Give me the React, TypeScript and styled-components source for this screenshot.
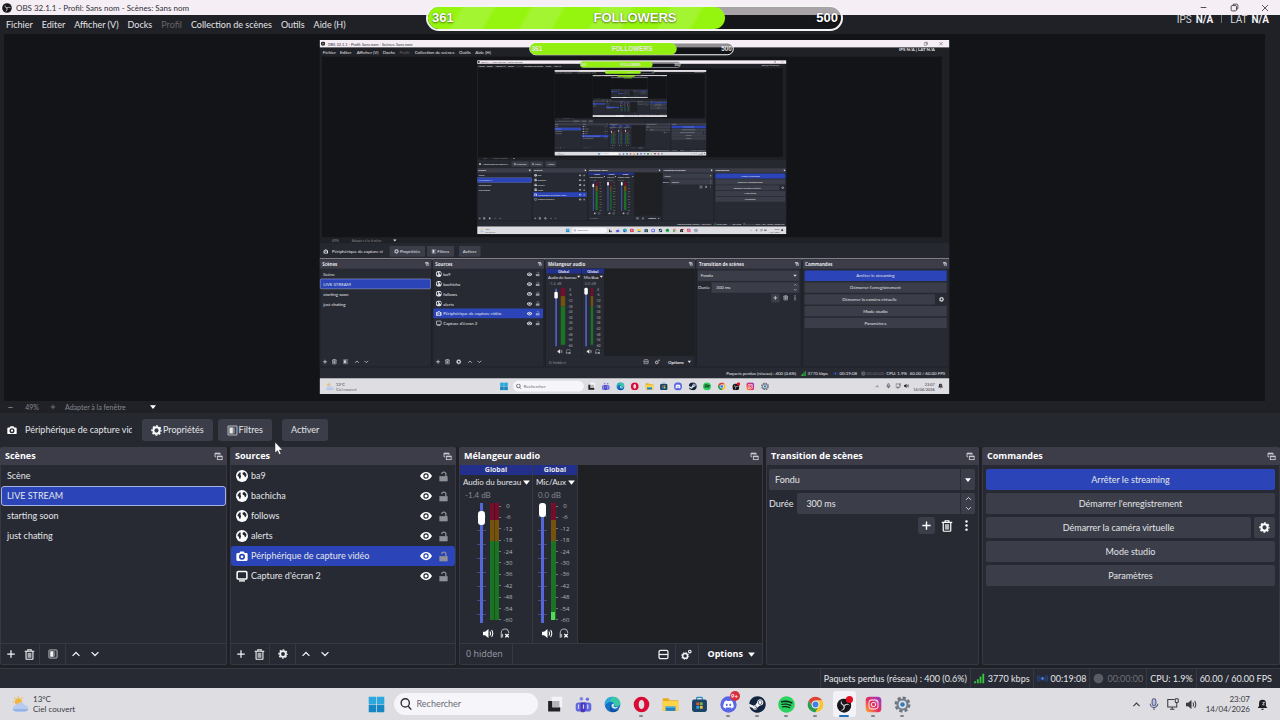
import React from "react";
import styled, { createGlobalStyle, css } from "styled-components";
import { FaDiscord, FaInstagram, FaSpotify, FaSteam } from "react-icons/fa";

const c = {
  canvas: "#131418",
  chrome: "#1f2126",
  panel: "#272a33",
  toolbar: "#25282f",
  header: "#3c3d49",
  control: "#3b3e49",
  border: "#363944",
  accent: "#2b45b8",
  text: "#e4e5e8",
  dim: "#85878e",
  white: "#fefefe",
  titlebar: "#f5eef4",
  taskbar: "#dedde2",
};

const UI = 'Lato, "Open Sans", sans-serif';
const HEADING = '"Open Sans", "Noto Sans", sans-serif';

const GlobalStyle = createGlobalStyle`
  *, *::before, *::after { box-sizing: border-box; }
  body { margin: 0; background: ${c.panel}; color: ${c.text}; font: 9px/12px ${UI}; }
  button, input, select { font: inherit; color: inherit; margin: 0; padding: 0; border: 0; background: none; }
  ul { list-style: none; margin: 0; padding: 0; }
  svg { display: block; flex: none; }
`;

/* ---------- icons ---------- */

type IconProps = React.SVGProps<SVGSVGElement>;

const Glyph = ({ children, ...p }: IconProps) => (
  <svg viewBox="0 0 16 16" width="11" height="11" fill="none" stroke="currentColor" strokeWidth="2" aria-hidden="true" {...p}>
    {children}
  </svg>
);

const Plus = (p: IconProps) => <Glyph {...p}><path d="M8 2v12M2 8h12" /></Glyph>;
const Minus = (p: IconProps) => <Glyph {...p}><path d="M3 8h10" /></Glyph>;
const Up = (p: IconProps) => <Glyph {...p}><path d="M2.500 11 8 5.500l5.500 5.500" /></Glyph>;
const Down = (p: IconProps) => <Glyph {...p}><path d="M2.500 5 8 10.500 13.500 5" /></Glyph>;
const Caret = (p: IconProps) => <Glyph {...p}><path d="M2 4.500h12L8 12z" fill="currentColor" stroke="none" /></Glyph>;
const Dots = (p: IconProps) => (
  <Glyph {...p}><g fill="currentColor" stroke="none"><circle cx="8" cy="2" r="1.800" /><circle cx="8" cy="8" r="1.800" /><circle cx="8" cy="14" r="1.800" /></g></Glyph>
);
const Trash = (p: IconProps) => (
  <Glyph strokeWidth="1.600" {...p}>
    <path d="M1 3.200h14M5.500 3V1h5v2M3 3.500V14q0 1 1 1h8q1 0 1-1V3.500" />
    <path d="M5.200 5.500h5.600v7.300H5.200z" fill="currentColor" fillOpacity=".65" stroke="none" />
  </Glyph>
);
const Filter = (p: IconProps) => (
  <Glyph strokeWidth="1.500" {...p}>
    <rect x="1.500" y="1.500" width="13" height="13" rx="1" opacity=".75" />
    <path d="M3.500 3.500h5v9h-5z" fill="currentColor" stroke="none" />
    <path d="M8.500 3.500h3v9h-3z" fill="currentColor" fillOpacity=".4" stroke="none" />
  </Glyph>
);
const Gear = (p: IconProps) => (
  <Glyph {...p}>
    <circle cx="8" cy="8" r="4.600" strokeWidth="3" />
    <circle cx="8" cy="8" r="6.600" strokeWidth="2" strokeDasharray="2.800 2.380" strokeDashoffset="1.400" />
  </Glyph>
);
const Gears = (p: IconProps) => (
  <Glyph {...p}>
    <circle cx="6" cy="10" r="3.600" strokeWidth="2.200" />
    <circle cx="6" cy="10" r="5.200" strokeWidth="1.200" strokeDasharray="2 2.080" />
    <circle cx="12.800" cy="3.800" r="1.900" strokeWidth="1.600" />
  </Glyph>
);
const Camera = (p: IconProps) => (
  <Glyph {...p}>
    <path d="M5.500 2h5l1 2H14q1.500 0 1.500 1.500V13q0 1.500-1.500 1.500H2Q.5 14.500.5 13V5.500Q.5 4 2 4h2.500zM8 5a4 4 0 1 0 0 8 4 4 0 0 0 0-8zm0 2.200a1.800 1.800 0 1 1 0 3.600 1.800 1.800 0 0 1 0-3.600z" fill="currentColor" stroke="none" fillRule="evenodd" />
  </Glyph>
);
const Globe = (p: IconProps) => (
  <Glyph {...p}>
    <circle cx="8" cy="8" r="8" fill="currentColor" stroke="none" />
    <path d="M2.500 6 5 3l1.500.5L6 6l.8 2.200L5.600 12l-1.300-.6L3.800 9 2 8zM8.600 3.600l3-.8 2.400 3-.4 2.600-1.700 1.700-.8-2.800-2-1z" fill={c.panel} stroke="none" />
  </Glyph>
);
const Display = (p: IconProps) => (
  <Glyph {...p}><rect x="1.500" y="2" width="13" height="10" rx="1.500" /><path d="M4 14.500h8" strokeWidth="1.800" /></Glyph>
);
const Eye = (p: IconProps) => (
  <Glyph {...p}>
    <path d="M0 8q3-5.500 8-5.500T16 8q-3 5.500-8 5.500T0 8zm8-3.600a3.600 3.600 0 1 0 0 7.200 3.600 3.600 0 0 0 0-7.200z" fill="currentColor" stroke="none" fillRule="evenodd" />
    <circle cx="8" cy="8" r="2" fill="currentColor" stroke="none" />
  </Glyph>
);
const Unlock = (p: IconProps) => (
  <Glyph {...p}><path d="M2 7.500h12V15H2z" fill="currentColor" stroke="none" /><path d="M11.500 8V4.500a3 3 0 0 0-6 0" strokeWidth="1.800" /></Glyph>
);
const Popout = (p: IconProps) => (
  <Glyph strokeWidth="1.600" {...p}><path d="M4 8.500H1.800v-6.500h9v3" /><path d="M1.800 3h9" strokeWidth="2.400" /><rect x="6" y="7.500" width="8.500" height="6" /><path d="M6 8h8.500" strokeWidth="2.400" /></Glyph>
);
const Speaker = (p: IconProps) => (
  <Glyph strokeWidth="1.500" {...p}><path d="M0 5.500h3L8 1.500v13L3 10.500H0z" fill="currentColor" stroke="none" /><path d="M10 5q2 3 0 6M12.500 3q3.500 5 0 10" /></Glyph>
);
const Headphones = (p: IconProps) => (
  <Glyph strokeWidth="1.800" {...p}>
    <path d="M3 14.500H2V7.500a6 6 0 0 1 12 0V8" opacity=".6" /><path d="M2.500 9.500h2.500v5.500H2.500z" fill="currentColor" stroke="none" opacity=".6" />
    <path d="m8.500 9.500 5.500 5.500M14 9.500 8.500 15" strokeWidth="2.200" />
  </Glyph>
);
const Rows = (p: IconProps) => <Glyph strokeWidth="1.800" {...p}><rect x="1.500" y="2" width="13" height="12" rx="2" /><path d="M1.500 8h13" /></Glyph>;
const Signal = (p: IconProps) => <Glyph strokeWidth="2.600" {...p} stroke="#35c940"><path d="M1.500 15v-3M5.500 15V9M9.500 15V5M13.500 15V1" /></Glyph>;
const Broadcast = (p: IconProps) => (
  <Glyph strokeWidth="1.600" {...p} stroke="#2c52a8"><circle cx="8" cy="8" r="2.200" fill="#5f8fe8" /><path d="M4.500 4q-3 4 0 8M11.500 4q3 4 0 8M2 3q-3 5 0 10M14 3q3 5 0 10" opacity=".6" /></Glyph>
);
const RecordDot = (p: IconProps) => <Glyph {...p}><circle cx="8" cy="8" r="7" fill="#5a5c63" stroke="none" /></Glyph>;
const Search = (p: IconProps) => <Glyph strokeWidth="1.800" {...p}><circle cx="7" cy="6.500" r="5.500" /><path d="m11 11 4 4.500" /></Glyph>;
const Mic = (p: IconProps) => (
  <Glyph strokeWidth="1.500" {...p}><rect x="5.500" y="1" width="5" height="9" rx="2.500" fill="#b6bde4" /><path d="M3 7.500a5 5 0 0 0 10 0M8 12.500V16" /></Glyph>
);
const Network = (p: IconProps) => (
  <Glyph strokeWidth="1.400" {...p}><path d="M10 2H1v10h12V9M4 15h6M7 12v3" /><rect x="11" y="1" width="4" height="5" rx="1" /><path d="M13 6v3" /></Glyph>
);
const Bell = (p: IconProps) => (
  <Glyph {...p}><path d="M8 1q5 0 5 5v4l2 3H1l2-3V6q0-5 5-5zM6 14h4q-.5 2-2 2t-2-2z" fill="currentColor" stroke="none" /><path d="M8 5h3l-3 3.500h3" stroke={c.taskbar} strokeWidth="1.200" /></Glyph>
);
const Restore = (p: IconProps) => (
  <Glyph strokeWidth="1.500" {...p}><rect x="2" y="4.500" width="9.500" height="9.500" rx="2" /><path d="M5 4.500Q5 2 7 2h4.500Q14 2 14 4.500V9q0 2-2.500 2.500" /></Glyph>
);
const Close = (p: IconProps) => <Glyph strokeWidth="1.600" {...p}><path d="m2 2 12 12M14 2 2 14" /></Glyph>;

const Art = ({ children, ...p }: IconProps) => (
  <svg viewBox="0 0 24 24" width="17" height="17" aria-hidden="true" {...p}>{children}</svg>
);
const ObsLogo = (p: IconProps) => (
  <Art {...p}>
    <circle cx="12" cy="12" r="11.500" fill="#17171b" />
    <g fill="#d6d4da">
      <path d="M8 3.500q-1.500 4 1.500 6.200Q12.500 12 16 9.500q-.5 1-2.500 2.200Q8.500 13 6.500 8.500 6 5.500 8 3.500z" />
      <path d="M8 3.500q-1.500 4 1.500 6.200Q12.500 12 16 9.500q-.5 1-2.500 2.200Q8.500 13 6.500 8.500 6 5.500 8 3.500z" transform="rotate(120 12 12)" />
      <path d="M8 3.500q-1.500 4 1.500 6.200Q12.500 12 16 9.500q-.5 1-2.500 2.200Q8.500 13 6.500 8.500 6 5.500 8 3.500z" transform="rotate(240 12 12)" />
    </g>
  </Art>
);
const ObsLive = (p: IconProps) => (
  <Art {...p}>
    <svg x="1" y="3" width="21" height="21"><ObsLogo width="21" height="21" /></svg>
    <circle cx="19" cy="5" r="5" fill="#e00d1e" />
  </Art>
);
const Windows = (p: IconProps) => (
  <Art {...p}><path d="M1 1h10.500v10.500H1zM12.500 1H23v10.500H12.500z" fill="#2ba9de" /><path d="M1 12.500h10.500V23H1zM12.500 12.500H23V23H12.500z" fill="#1787c4" /></Art>
);
const TaskView = (p: IconProps) => (
  <Art {...p}><path d="M8 1h15v15H8z" fill="#f4f4f6" /><path d="M3 7h6v9h11v6H3z" fill="#222226" /><path d="M9 7h10v9H9z" fill="#b6b5ba" /></Art>
);
const Teams = (p: IconProps) => (
  <Art {...p}>
    <circle cx="9" cy="4" r="2.600" fill="#8486e6" /><circle cx="17.500" cy="4.500" r="2.300" fill="#6a6cdf" />
    <rect x="1" y="9" width="22" height="13" rx="4" fill="#6267dc" /><path d="M8 9h7v10q0 4-4 4t-3-4z" fill="#4a36bd" />
    <path d="M5 12v6M12 12v6M18 12v6" stroke="#cfd0ff" strokeWidth="1.800" />
  </Art>
);
const Edge = (p: IconProps) => (
  <Art {...p}>
    <circle cx="12" cy="12" r="11" fill="#1670c4" />
    <path d="M1.500 10Q4 1 12.500 1 22 1.500 23 10q0 5-6 5-3 0-2.500-2.500Q14 8 9.500 8 4 8 1.500 13z" fill="#38c6a4" />
    <path d="M1.200 10Q3 2 11 1q-3 3-1.500 7Q4 8 1.500 13z" fill="#29a7df" />
    <path d="M9.500 12q-1 7 6.500 8 3 0 5-1.500-3 4.500-9 4.500Q6 21 9.500 12z" fill="#0f4fa0" />
    <path d="M13.500 10.500q1.500 2-.3 4 3 2.300 6.800.3-1 2.700-4.500 3.200-4-.5-5-4 .5-3 3-3.500z" fill="#dfe9f2" />
  </Art>
);
const Opera = (p: IconProps) => (
  <Art {...p}><path d="M12 1a11 11 0 1 0 0 22 11 11 0 0 0 0-22zm0 4.500c2.500 0 4 3 4 6.500s-1.500 6.500-4 6.500S8 15.500 8 12s1.500-6.500 4-6.500z" fill="#d90b34" fillRule="evenodd" /></Art>
);
const Explorer = (p: IconProps) => (
  <Art {...p}>
    <path d="M1 3h8l2 3h12v15H1z" fill="#e8a91c" /><path d="M1 7h22v14H1z" fill="#fbd44a" /><path d="M5 15h14v6H5z" fill="#1e7fc9" /><path d="M5 15h14v2H5z" fill="#4aa8e8" />
  </Art>
);
const Store = (p: IconProps) => (
  <Art {...p}>
    <path d="M8 6V3q0-1 1-1h6q1 0 1 1v3" stroke="#2c8fc9" strokeWidth="1.800" fill="none" /><rect x="1.500" y="5" width="21" height="17.500" rx="3" fill="#1c4468" />
    <path d="M7.500 9h4v4h-4z" fill="#e3573a" /><path d="M12.500 9h4v4h-4z" fill="#7fba3c" /><path d="M7.500 14h4v4h-4z" fill="#2aa4e0" /><path d="M12.500 14h4v4h-4z" fill="#f5bd2c" />
  </Art>
);
const Discord = (p: IconProps) => <Art {...p}><circle cx="12" cy="12" r="11.500" fill="#5a66e4" /><g transform="translate(4 4)"><FaDiscord size={16} color="#fff" /></g></Art>;
const Steam = (p: IconProps) => <Art {...p}><circle cx="12" cy="12" r="10.500" fill="#f2f3f6" /><FaSteam size={24} color="#13243f" /></Art>;
const Spotify = (p: IconProps) => <Art {...p}><circle cx="12" cy="12" r="10" fill="#10241a" /><FaSpotify size={24} color="#2ad35f" /></Art>;
const Chrome = (p: IconProps) => (
  <Art {...p}>
    <circle cx="12" cy="12" r="11" fill="#e5e6e9" />
    <path d="M2.500 6.500A11 11 0 0 1 21.500 6.500H12a5.500 5.500 0 0 0-4.800 8.200z" fill="#de4335" />
    <path d="M2.500 6.500A11 11 0 0 0 12 23l4.800-8.200a5.500 5.500 0 0 1-9.600 0z" fill="#2a9d4e" />
    <path d="M21.500 6.500A11 11 0 0 1 12 23l4.800-8.200A5.500 5.500 0 0 0 12 6.500z" fill="#fbc52b" />
    <circle cx="12" cy="12" r="5.200" fill="#f4f5f8" /><circle cx="12" cy="12" r="4.200" fill="#3f7fe8" />
  </Art>
);
const Instagram = (p: IconProps) => (
  <Art {...p}>
    <defs><linearGradient id="insta" x1="0" y1="1" x2="1" y2="0"><stop offset="0" stopColor="#fdb53c" /><stop offset=".45" stopColor="#e5305a" /><stop offset="1" stopColor="#9438d0" /></linearGradient></defs>
    <rect x="1" y="1" width="22" height="22" rx="5" fill="url(#insta)" /><g transform="translate(4 4)"><FaInstagram size={16} color="#fff" /></g>
  </Art>
);
const Settings = (p: IconProps) => (
  <Art {...p}>
    <circle cx="12" cy="12" r="9.500" fill="none" stroke="#6c7480" strokeWidth="3.500" strokeDasharray="4.500 2.960" /><circle cx="12" cy="12" r="8.500" fill="#747c88" />
    <circle cx="12" cy="12" r="5.500" fill="#dde3ea" /><circle cx="12" cy="12" r="3.200" fill="#3679b8" />
  </Art>
);
const Weather = (p: IconProps) => (
  <Art {...p}>
    <circle cx="9" cy="8" r="5" fill="#f3b63c" /><path d="M9 0v3M1 8h2M3 2l2 2M15 2l-2 2" stroke="#f0bd58" strokeWidth="1.500" />
    <path d="M6 22q-5-.5-5-4.500T6 13q1.500-4 6-4t6 4q5 .5 5 4.500T18 22z" fill="#b7cbf0" /><path d="M6 22q-4.500-.5-5-3.500h22Q22 22 18 22z" fill="#93b3ea" />
  </Art>
);

/* ---------- data ---------- */

const windowTitle = "OBS 32.1.1 - Profil: Sans nom - Scènes: Sans nom";
const menus = [
  { label: "Fichier", x: 6 },
  { label: "Editer", x: 41 },
  { label: "Afficher (V)", x: 75 },
  { label: "Docks", x: 128 },
  { label: "Profil", x: 162, off: true },
  { label: "Collection de scènes", x: 193 },
  { label: "Outils", x: 283 },
  { label: "Aide (H)", x: 316 },
];
const scenes = ["Scène", "LIVE STREAM", "starting soon", "just chating"];
const activeScene = 1;
const sources = [
  { name: "ba9", Icon: Globe },
  { name: "bachicha", Icon: Globe },
  { name: "follows", Icon: Globe },
  { name: "alerts", Icon: Globe },
  { name: "Périphérique de capture vidéo", Icon: Camera, active: true },
  { name: "Capture d'écran 2", Icon: Display },
];
const levels = ["0", "-6", "-12", "-18", "-24", "-30", "-36", "-42", "-48", "-54", "-60"];
const commands = ["Arrêter le streaming", "Démarrer l'enregistrement", "Démarrer la caméra virtuelle", "Mode studio", "Paramètres"];
const apps: { name: string; Icon: (p: IconProps) => React.ReactElement; run?: boolean; active?: boolean; badge?: string }[] = [
  { name: "Vue des tâches", Icon: TaskView },
  { name: "Teams", Icon: Teams },
  { name: "Edge", Icon: Edge },
  { name: "Opera", Icon: Opera, run: true },
  { name: "Explorateur", Icon: Explorer },
  { name: "Store", Icon: Store },
  { name: "Discord", Icon: Discord, run: true, badge: "9+" },
  { name: "Steam", Icon: Steam, run: true },
  { name: "Spotify", Icon: Spotify, run: true },
  { name: "Chrome", Icon: Chrome, run: true },
  { name: "OBS", Icon: ObsLive, run: true, active: true },
  { name: "Instagram", Icon: Instagram, run: true },
  { name: "Réglages", Icon: Settings, run: true },
];

/* ---------- captured desktop shown on the preview canvas ---------- */

const Depth = React.createContext(1);

type TProps = { x: number; y: number; children: string; fill?: string; bold?: boolean; size?: number; anchor?: "start" | "middle" | "end" };

/* Past the second reflection a label is under two pixels high, so it becomes a faint bar. */
const T = ({ x, y, children, fill = c.text, bold, size = 9, anchor = "start" }: TProps) => {
  const depth = React.useContext(Depth);
  if (depth > 2) {
    const w = children.length * size * 0.5;
    const left = anchor === "start" ? x : anchor === "middle" ? x - w / 2 : x - w;
    return <rect x={left} y={y - 3} width={w} height="6" fill={fill} opacity=".35" />;
  }
  return <text x={x} y={y + 4} fill={fill} fontSize={size} fontWeight={bold ? 700 : 400} textAnchor={anchor}>{children}</text>;
};

const dockFrames = [
  { title: "Scènes", x: 0, w: 227 },
  { title: "Sources", x: 230, w: 226 },
  { title: "Mélangeur audio", x: 459, w: 304 },
  { title: "Transition de scènes", x: 766, w: 213 },
  { title: "Commandes", x: 982, w: 298 },
];

const CapturedChannel = ({ x, w, name, db, thumb, meter, bars }: { x: number; w: number; name: string; db: string; thumb: number; meter: number; bars: number }) => (
  <g>
    <rect x={x} y="465" width={w} height="178" fill={c.panel} />
    <rect x={x} y="465" width={w} height="10" fill="#22308c" />
    <T x={x + w / 2} y={470} size={8} bold anchor="middle">Global</T>
    <T x={x + 4} y={482} size={8}>{name}</T>
    <Caret x={x + w - 10} y={477} width="9" height="9" />
    <T x={x + 6} y={495} size={8} fill={c.dim}>{db}</T>
    <rect x={meter - 11} y="506" width="3" height="117" fill="#5468d8" />
    <rect x={meter - 13} y={thumb} width="7" height="14" rx="3" fill="#fff" />
    <rect x={meter} y="504" width={bars} height="17" fill="#750e2b" />
    <rect x={meter} y="521" width={bars} height="21" fill="#76520f" />
    <rect x={meter} y="542" width={bars} height="78" fill="#1c7323" />
    {levels.map((l, i) => <T key={l} x={meter + bars + 10} y={506 + i * 11.4} size={6} anchor="middle" fill="#b4b5ba">{l}</T>)}
    <Speaker x={x + w / 2 - 13} y={628} width="11" height="11" /><Headphones x={x + w / 2 + 4} y={628} width="11" height="11" />
  </g>
);

const Captured = ({ depth }: { depth: number }) => (
  <Depth.Provider value={depth}>
  <g fontFamily={UI} color={c.text}>
    <rect width="1280" height="720" fill={c.panel} />
    <rect y="15" width="1280" height="398" fill={c.chrome} />
    <rect x="4" y="34" width="1261" height="367" fill={c.canvas} />
    <rect width="1280" height="15" fill={c.titlebar} />
    <ObsLogo x={2} y={3} width="9" height="9" />
    <T x={16} y={8} size={8} fill="#33313a">{windowTitle}</T>
    <g color="#33313a"><Restore x={1228} y={3} width="9" height="9" /><Close x={1259} y={3} width="9" height="9" /></g>
    {menus.map((m) => <T key={m.label} x={m.x} y={24} fill={m.off ? "#62646b" : c.text}>{m.label}</T>)}
    <T x={1178} y={19} bold>IPS N/A  |  LAT N/A</T>
    <T x={25} y={407} size={7} fill={c.dim}>49%</T>
    <T x={65} y={407} size={7} fill={c.dim}>Adapter à la fenêtre</T>
    <Caret x={148} y={403} width="9" height="9" />
    <rect y="413" width="1280" height="34" fill={c.toolbar} />
    <Camera x={7} y={425} width="10" height="10" />
    <T x={25} y={430}>Périphérique de capture vi</T>
    <rect x="142" y="419" width="72" height="22" rx="2" fill={c.control} /><Gear x={151} y={425} width="10" height="10" /><T x={163} y={430}>Propriétés</T>
    <rect x="218" y="419" width="55" height="22" rx="2" fill={c.control} /><Filter x={227} y={425} width="10" height="10" /><T x={239} y={430}>Filtres</T>
    <rect x="283" y="419" width="44" height="22" rx="2" fill={c.control} /><T x={305} y={430} anchor="middle">Activer</T>
    {depth === 1 && <rect y="444" width="1280" height="3" fill="#a7a3ad" />}
    {dockFrames.map((d) => (
      <g key={d.title}>
        <rect x={d.x} y="447" width={d.w} height="218" fill={c.panel} stroke="#1e2026" strokeWidth="2" />
        <rect x={d.x} y="447" width={d.w} height="18" fill={c.header} />
        <g fontFamily={HEADING}><T x={d.x + 5} y={456} bold>{d.title}</T></g>
        <Popout x={d.x + d.w - 13} y={451} width="9" height="9" />
      </g>
    ))}
    <rect x="1" y="486" width="224" height="20" rx="2" fill={c.accent} stroke="#a6b2e6" />
    {scenes.map((s, i) => <T key={s} x={7} y={476 + i * 20}>{s}</T>)}
    {sources.map(({ name, Icon, active }, i) => (
      <g key={name}>
        {active && <rect x="231" y={466 + i * 20} width="223" height="20" rx="2" fill={c.accent} />}
        <Icon x={236} y={470 + i * 20} width="12" height="12" />
        <T x={251} y={476 + i * 20}>{name}</T>
        <Eye x={421} y={471 + i * 20} width="11" height="11" />
        <Unlock x={438} y={471 + i * 20} width="10" height="10" opacity=".6" />
      </g>
    ))}
    {[5, 235].map((x) => (
      <g key={x}><Plus x={x} y={649} /><Trash x={x + 19} y={649} />{x === 5 ? <Filter x={x + 42} y={649} /> : <Gear x={x + 42} y={649} />}<Up x={x + 65} y={649} /><Down x={x + 84} y={649} /></g>
    ))}
    <rect x="460" y="465" width="302" height="178" fill="#1e2024" />
    <CapturedChannel x={460} w={72} name="Audio du bureau" db="-1.4 dB" thumb={512} meter={490} bars={9} />
    {depth > 1 && <CapturedChannel x={578} w={72} name="Capture vidéo" db="0.0 dB" thumb={504} meter={608} bars={9} />}
    <CapturedChannel x={533} w={45} name="Mic/Aux" db="0.0 dB" thumb={504} meter={551} bars={5} />
    <T x={466} y={655} fill={c.dim}>0 hidden</T>
    <Rows x={658} y={649} /><Gears x={681} y={649} /><T x={708} y={655} bold>Options</T><Caret x={747} y={650} width="9" height="9" />
    <rect x="769" y="469" width="206" height="21" fill={c.control} /><T x={775} y={479}>Fondu</T><Caret x={962} y={475} width="9" height="9" />
    <T x={769} y={503}>Durée</T><rect x="797" y="493" width="178" height="21" fill={c.control} /><T x={806} y={503}>300 ms</T>
    <Up x={963} y={494} width="8" height="8" /><Down x={963} y={504} width="8" height="8" />
    <rect x="918" y="516" width="17" height="18" rx="2" fill={c.control} /><Plus x={921} y={519} /><Trash x={942} y={519} /><Dots x={961} y={519} />
    {commands.map((t, i) => (
      <g key={t}>
        <rect x="986" y={469 + i * 24} width={i === 2 ? 265 : 289} height="21" rx="2" fill={i ? c.control : c.accent} />
        <T x={i === 2 ? 1118 : 1130} y={479 + i * 24} anchor="middle">{t}</T>
      </g>
    ))}
    <Gear x={1259} y={522} />
    <T x={969} y={678} anchor="end">Paquets perdus (réseau) : 400 (0.6%)</T><Signal x={978} y={673} /><T x={992} y={678}>3770 kbps</T>
    <Broadcast x={1043} y={673} /><T x={1057} y={678}>00:19:08</T><RecordDot x={1100} y={673} />
    <T x={1112} y={678} fill="#6d6f76">00:00:00</T><T x={1152} y={678}>CPU: 1.9%</T><T x={1272} y={678} anchor="end">60.00 / 60.00 FPS</T>
    <rect y="688" width="1280" height="32" fill={c.taskbar} />
    <Weather x={12} y={696} opacity=".7" />
    <T x={33} y={699} size={8} fill="#3a3a40">13°C</T><T x={33} y={709} size={8} fill="#5a5a62">Ciel couvert</T>
    <Windows x={366} y={696} /><rect x="393" y="693" width="144" height="22" rx="11" fill="#f6f5f9" />
    <g color="#2b2b30"><Search x={399} y={699} /></g><T x={415} y={704} fill="#6a6a72">Rechercher</T>
    {apps.map(({ name, Icon }, i) => <Icon key={name} x={544 + Math.round(i * 29.4)} y={696} />)}
    <g color="#2b2b30"><Up x={1129} y={700} width="9" height="9" /><Mic x={1151} y={698} /><Network x={1171} y={698} /><Speaker x={1188} y={698} /><Bell x={1257} y={698} /></g>
    <T x={1251} y={699} size={8} fill="#3a3a40" anchor="end">23:07</T><T x={1251} y={709} size={8} fill="#3a3a40" anchor="end">14/04/2026</T>
    {depth < 5 && (
      <svg x="320" y="41" width="629" height="354" viewBox="0 0 1280 720" preserveAspectRatio="none"><Captured depth={depth + 1} /></svg>
    )}
    <rect x="427" y="6" width="414" height="24" rx="12" fill="#0006" stroke="#fff" strokeWidth="2" />
    <rect x="427" y="6" width="299" height="24" rx="12" fill="#93ef12" />
    <g fontFamily="Liberation Sans, sans-serif"><T x={431} y={19} size={13} bold>361</T><T x={635} y={19} size={13} bold anchor="middle">FOLLOWERS</T><T x={838} y={19} size={13} bold anchor="end">500</T></g>
  </g>
  </Depth.Provider>
);

/* ---------- page ---------- */

const Shell = styled.div`
  position: relative;
  display: flex;
  flex-direction: column;
  min-width: 1040px;
  height: 100vh;
  min-height: 560px;
  overflow: hidden;
`;
const Row = styled.div<{ $gap?: number }>`
  display: flex;
  align-items: center;
  gap: ${(p) => p.$gap ?? 0}px;
`;
const Spring = styled.div`flex: 1;`;

const TitleBar = styled.header`
  display: flex;
  align-items: center;
  gap: 4px;
  height: 15px;
  padding: 0 7px 0 2px;
  background: ${c.titlebar};
  color: #33313a;
  font-size: 8px;
`;
const WindowButton = styled.button`
  display: grid;
  place-items: center;
  width: 16px;
  height: 15px;
  margin-left: 11px;
`;
const MenuBar = styled.nav`
  display: flex;
  align-items: center;
  gap: 9px;
  height: 19px;
  padding: 0 11px 0 6px;
  background: ${c.chrome};
`;
const MenuButton = styled.button`
  white-space: nowrap;
  &:disabled { color: #62646b; }
`;
const NetStats = styled.div`
  display: flex;
  align-self: flex-start;
  gap: 4px;
  color: #d6d7db;
  font: 10px/9px Roboto, sans-serif;
  b { color: #f4f4f6; }
  i { width: 1px; height: 8px; margin: 0 4px; background: #6f7178; }
`;

const PreviewArea = styled.main`
  flex: 1 1 0;
  min-height: 0;
  display: flex;
  padding: 0 15px 0 4px;
  background: ${c.chrome};
`;
const Canvas = styled.div`
  flex: 1;
  min-width: 0;
  padding: 6px 0 7px;
  background: ${c.canvas};
  svg.feed { width: 100%; height: 100%; }
`;
const ZoomBar = styled(Row)`
  height: 12px;
  padding: 0 7px;
  background: ${c.chrome};
  color: ${c.dim};
  font-size: 7px;
`;
const ZoomField = styled.button`
  display: flex;
  align-items: center;
  justify-content: space-between;
  width: 92px;
  margin-left: 9px;
  white-space: nowrap;
  svg { color: #fff; }
`;
const ZoomValue = styled.span`
  width: 36px;
  text-align: center;
`;

const SourceBar = styled(Row)`
  height: 34px;
  padding: 0 7px;
  background: ${c.toolbar};
`;
const SourceName = styled.span`
  width: 107px;
  margin: 0 10px 0 8px;
  overflow: hidden;
  white-space: nowrap;
`;
const ToolButton = styled.button<{ $lead?: number }>`
  display: flex;
  align-items: center;
  justify-content: center;
  gap: 1px;
  height: 22px;
  padding: 0 9px;
  margin-right: 5px;
  margin-left: ${(p) => p.$lead ?? 0}px;
  border-radius: 3px;
  background: ${c.control};
`;

const Docks = styled.div`
  display: grid;
  grid-template-columns: 227fr 226fr 304fr 213fr 298fr;
  grid-auto-rows: minmax(218px, auto);
  gap: 3px;
  padding-bottom: 3px;
  background: #1f2127;
`;
const DockBox = styled.section`
  display: flex;
  flex-direction: column;
  min-width: 0;
  border: 1px solid ${c.border};
  border-top: 0;
  border-radius: 2px;
  background: ${c.panel};
`;
const DockHead = styled.div`
  display: flex;
  align-items: center;
  justify-content: space-between;
  height: 18px;
  margin: 0 -1px;
  padding: 0 4px 0 5px;
  background: ${c.header};
  border-radius: 2px 2px 0 0;
`;
const DockTitle = styled.h2`
  margin: 0;
  color: ${c.white};
  font: 700 9px/12px ${HEADING};
`;
const DockBody = styled.div`
  flex: 1;
  display: flex;
  flex-direction: column;
  padding-top: 1px;
`;
const DockFoot = styled.div`
  display: flex;
  align-items: center;
  height: 21px;
  border-top: 1px solid ${c.border};
`;
const FootButton = styled.button<{ $w?: number; $line?: boolean }>`
  display: grid;
  place-items: center;
  width: ${(p) => p.$w ?? 19}px;
  height: 20px;
  color: #f2f2f4;
  ${(p) => p.$line && css`border-left: 1px solid ${c.border}; border-right: 1px solid ${c.border};`}
`;
const ListRow = styled.li<{ $on?: boolean; $ring?: boolean }>`
  display: flex;
  align-items: center;
  height: 20px;
  padding: 0 5px 0 4px;
  border: 1px solid ${(p) => (p.$ring ? "#a6b2e6" : "transparent")};
  border-radius: 3px;
  background: ${(p) => (p.$on ? c.accent : "none")};
`;
const RowName = styled.button`
  flex: 1;
  min-width: 0;
  text-align: left;
  padding-left: 3px;
  white-space: nowrap;
`;
const SceneName = styled(RowName)`
  padding-left: 1px;
`;
const RowIcon = styled.button<{ $dim?: boolean }>`
  margin-left: 6px;
  color: ${(p) => (p.$dim ? "#909197" : "#fff")};
`;

const Mixer = styled.div`
  flex: 1;
  display: flex;
  background: #1e2024;
`;
const Channel = styled.div<{ $w: number }>`
  display: flex;
  flex-direction: column;
  width: ${(p) => p.$w}px;
  border-right: 1px solid ${c.border};
  background: ${c.panel};
`;
const ChannelHead = styled.div`
  height: 10px;
  background: #22308c;
  font: 700 7px/10px ${HEADING};
  text-align: center;
`;
const ChannelName = styled.button`
  display: flex;
  align-items: center;
  justify-content: space-between;
  height: 14px;
  padding: 0 1px 0 3px;
  font-size: 8px;
  white-space: nowrap;
`;
const Decibel = styled.div`
  height: 14px;
  padding-left: 5px;
  color: ${c.dim};
  font-size: 8px;
`;
const Levels = styled.div`
  display: flex;
  justify-content: center;
  height: 120px;
`;
const Fader = styled.input`
  appearance: none;
  writing-mode: vertical-lr;
  direction: rtl;
  width: 9px;
  height: 120px;
  margin-right: 4px;
  background: repeating-linear-gradient(to bottom, transparent 0 13px, #46507e 13px 14px);
  &::-webkit-slider-runnable-track { width: 3px; background: #5468d8; }
  &::-webkit-slider-thumb { appearance: none; width: 7px; height: 14px; margin-left: -2px; border-radius: 3px; background: #fff; }
`;
const Meter = styled.div<{ $w: number }>`
  width: ${(p) => p.$w}px;
  height: 117px;
  display: flex;
  align-items: flex-end;
  background: linear-gradient(#750e2b 0 17px, #76520f 17px 38px, #1c7323 38px);
`;
const Live = styled.i`
  width: 4px;
  height: 8px;
  background: #52d95c;
`;
const Split = styled.i`
  width: 1px;
  height: 100%;
  margin: 0 auto;
  background: #0004;
`;
const Scale = styled.ol`
  display: flex;
  flex-direction: column;
  justify-content: space-between;
  width: 16px;
  height: 122px;
  margin: -1px 0 0;
  padding: 0;
  list-style: none;
  color: #b4b5ba;
  font: 6px/8px ${HEADING};
  text-align: center;
  li { display: flex; align-items: center; justify-content: center; }
  li::before { content: ""; width: 2px; height: 1px; background: #777981; }
  span { flex: 1; }
`;
const ChannelFoot = styled(Row)`
  justify-content: center;
  height: 20px;
`;
const Hidden = styled.button`
  height: 20px;
  padding: 0 9px 0 6px;
  border-right: 1px solid ${c.border};
  color: #9b9ca3;
  font: 9px/12px ${HEADING};
`;
const OptionsButton = styled.button`
  display: flex;
  align-items: center;
  gap: 4px;
  padding: 0 6px 0 9px;
  color: #fff;
  font: 700 9px/12px ${HEADING};
`;

const Form = styled.div`
  display: flex;
  flex-direction: column;
  gap: 3px;
  padding: 4px 3px 0 2px;
`;
const Field = styled.div`
  position: relative;
  flex: 1 0 auto;
  display: flex;
  height: 21px;
  border-radius: 2px;
  background: ${c.control};
`;
const FieldEnd = styled.span`
  position: absolute;
  right: 0;
  top: 0;
  display: flex;
  flex-direction: column;
  align-items: center;
  justify-content: space-evenly;
  width: 15px;
  height: 21px;
  border-left: 1px solid #2a2c35;
  pointer-events: none;
`;
const Select = styled.select`
  appearance: none;
  width: 100%;
  padding-left: 6px;
`;
const TextInput = styled.input`
  width: 100%;
  padding-left: 9px;
`;
const SmallButton = styled.button<{ $fill?: boolean }>`
  display: grid;
  place-items: center;
  width: 17px;
  height: 17px;
  border-radius: 3px;
  background: ${(p) => (p.$fill ? c.control : "none")};
  color: #fff;
`;
const CommandList = styled(Form)`
  padding: 4px 4px 0 3px;
`;
const Command = styled.button<{ $primary?: boolean; $square?: boolean }>`
  display: grid;
  place-items: center;
  flex: ${(p) => (p.$square ? "none" : "1 1 auto")};
  width: ${(p) => (p.$square ? "21px" : "auto")};
  height: 21px;
  border-radius: 2px;
  background: ${(p) => (p.$primary ? c.accent : c.control)};
`;

const StatusBar = styled.footer`
  display: flex;
  justify-content: flex-end;
  height: 20px;
  padding-right: 5px;
  border-top: 1px solid ${c.border};
  background: ${c.panel};
`;
const StatusItem = styled.span<{ $dim?: boolean }>`
  display: flex;
  align-items: center;
  gap: 3px;
  padding: 0 3px;
  border-left: 1px solid ${c.border};
  color: ${(p) => (p.$dim ? "#6d6f76" : c.text)};
  white-space: nowrap;
`;

const TaskBar = styled.footer`
  display: grid;
  grid-template-columns: 1fr auto 1fr;
  align-items: center;
  height: 32px;
  padding: 0 12px;
  background: ${c.taskbar};
  color: #3a3a40;
  font-size: 8px;
  line-height: 10px;
`;
const SearchBox = styled.label`
  display: flex;
  align-items: center;
  gap: 5px;
  width: 144px;
  height: 22px;
  margin: 0 2px 0 9px;
  padding-left: 6px;
  border-radius: 11px;
  background: #f6f5f9;
  color: #2b2b30;
  font-size: 9px;
  input { width: 100px; outline: 0; }
  input::placeholder { color: #6a6a72; opacity: 1; }
`;
const AppButton = styled.button<{ $active?: boolean; $run?: boolean }>`
  position: relative;
  display: grid;
  place-items: center;
  width: 23px;
  height: 26px;
  margin: 0 3px;
  border-radius: 3px;
  background: ${(p) => (p.$active ? "#f3f2f6" : "none")};
  &::after {
    content: "";
    position: absolute;
    bottom: 0;
    left: 50%;
    width: ${(p) => (p.$active ? 10 : 4)}px;
    height: 2px;
    border-radius: 1px;
    transform: translateX(-50%);
    background: ${(p) => (p.$active ? "#1f6fb8" : p.$run ? "#85848a" : "transparent")};
  }
`;
const Apps = styled(Row)`
  margin-left: 4px;
`;
const Badge = styled.span`
  position: absolute;
  top: 0;
  right: 0;
  width: 10px;
  height: 10px;
  border-radius: 5px;
  background: #d8303f;
  color: #fff;
  font-size: 6px;
  font-weight: 700;
  text-align: center;
`;
const Tray = styled(Row)`
  justify-content: flex-end;
`;
const Clock = styled.time`
  margin: 0 0 0 2px;
  text-align: right;
`;

const Goal = styled.div`
  position: absolute;
  top: 5px;
  left: calc(50% - 214px);
  width: 417px;
  height: 26px;
  border: 2px solid #f4f4f4;
  border-radius: 13px;
  background: #00000050;
  color: #fff;
  font: bold 13px/22px "Liberation Sans", Arial, sans-serif;
  text-shadow: 0 1px 2px #0007, 0 0 1px #0006;
`;
const GoalFill = styled.div`
  width: 72%;
  height: 22px;
  border-radius: 11px;
  background: repeating-linear-gradient(120deg, #95f50e 0 28px, #a4f531 32px 56px, #95f50e 60px);
`;
const GoalText = styled.div`
  position: absolute;
  inset: 0;
  display: flex;
  justify-content: space-between;
  padding: 0 3px 0 4px;
`;
const Pointer = styled.svg`
  position: absolute;
  left: 274px;
  bottom: 265px;
`;

const Dock = ({ title, children }: { title: string; children: React.ReactNode }) => (
  <DockBox>
    <DockHead><DockTitle>{title}</DockTitle><button aria-label={`Détacher ${title}`}><Popout width="9" height="9" color="#c9cace" /></button></DockHead>
    {children}
  </DockBox>
);

const MixerChannel = ({ name, db, value, width, stereo }: { name: string; db: string; value: number; width: number; stereo?: boolean }) => (
  <Channel $w={width}>
    <ChannelHead>Global</ChannelHead>
    <ChannelName>{name}<Caret width="9" height="9" color="#fff" /></ChannelName>
    <Decibel>{db}</Decibel>
    <Levels>
      <Fader type="range" min="0" max="100" defaultValue={value} aria-label={name} />
      <Meter $w={stereo ? 9 : 5}>{stereo ? <Split /> : <Live />}</Meter>
      <Scale>{levels.map((l) => <li key={l}><span>{l}</span></li>)}</Scale>
    </Levels>
    <ChannelFoot $gap={6}>
      <button aria-label={`Muet ${name}`}><Speaker width="11" height="11" color="#fff" /></button>
      <button aria-label={`Écoute ${name}`}><Headphones width="10" height="10" color="#fff" /></button>
    </ChannelFoot>
  </Channel>
);

export default function App() {
  return (
    <Shell>
      <GlobalStyle />
      <TitleBar>
        <ObsLogo width="10" height="10" />
        <span>{windowTitle}</span>
        <Spring />
        <WindowButton aria-label="Réduire"><Minus width="9" height="9" strokeWidth="1.500" /></WindowButton>
        <WindowButton aria-label="Restaurer"><Restore width="9" height="9" /></WindowButton>
        <WindowButton aria-label="Fermer"><Close width="8" height="8" /></WindowButton>
      </TitleBar>
      <MenuBar>
        {menus.map((m) => <MenuButton key={m.label} disabled={m.off}>{m.label}</MenuButton>)}
        <Spring />
        <NetStats><span>IPS</span><b>N/A</b><i /><span>LAT</span><b>N/A</b></NetStats>
      </MenuBar>

      <PreviewArea>
        <Canvas>
          <svg className="feed" viewBox="0 0 1280 720" role="img" aria-label="Aperçu"><Captured depth={1} /></svg>
        </Canvas>
      </PreviewArea>
      <ZoomBar>
        <button aria-label="Zoom arrière"><Minus width="7" height="7" /></button>
        <ZoomValue>49%</ZoomValue>
        <button aria-label="Zoom avant"><Plus width="6" height="6" /></button>
        <ZoomField>Adapter à la fenêtre<Caret width="8" height="8" /></ZoomField>
      </ZoomBar>
      <SourceBar>
        <Camera width="10" height="10" color="#fff" />
        <SourceName>Périphérique de capture vidéo</SourceName>
        <ToolButton><Gear width="11" height="11" color="#fff" />Propriétés</ToolButton>
        <ToolButton><Filter width="11" height="11" />Filtres</ToolButton>
        <ToolButton $lead={5}>Activer</ToolButton>
      </SourceBar>

      <Docks>
        <Dock title="Scènes">
          <DockBody as="ul">
            {scenes.map((s, i) => <ListRow key={s} $on={i === activeScene} $ring={i === activeScene}><SceneName>{s}</SceneName></ListRow>)}
          </DockBody>
          <DockFoot>
            <FootButton aria-label="Ajouter une scène"><Plus width="10" height="10" /></FootButton>
            <FootButton aria-label="Supprimer la scène"><Trash /></FootButton>
            <FootButton $w={27} $line aria-label="Filtres de scène"><Filter width="10" height="10" /></FootButton>
            <FootButton aria-label="Monter la scène"><Up width="10" height="10" /></FootButton>
            <FootButton aria-label="Descendre la scène"><Down width="10" height="10" /></FootButton>
          </DockFoot>
        </Dock>

        <Dock title="Sources">
          <DockBody as="ul">
            {sources.map(({ name, Icon, active }) => (
              <ListRow key={name} $on={active}>
                <Icon width="12" height="12" color="#fff" />
                <RowName>{name}</RowName>
                <RowIcon aria-label={`Visibilité ${name}`}><Eye width="12" height="12" /></RowIcon>
                <RowIcon $dim aria-label={`Verrou ${name}`}><Unlock width="11" height="11" /></RowIcon>
              </ListRow>
            ))}
          </DockBody>
          <DockFoot>
            <FootButton aria-label="Ajouter une source"><Plus width="10" height="10" /></FootButton>
            <FootButton aria-label="Supprimer la source"><Trash /></FootButton>
            <FootButton $w={27} $line aria-label="Propriétés de la source"><Gear width="10" height="10" /></FootButton>
            <FootButton aria-label="Monter la source"><Up width="10" height="10" /></FootButton>
            <FootButton aria-label="Descendre la source"><Down width="10" height="10" /></FootButton>
          </DockFoot>
        </Dock>

        <Dock title="Mélangeur audio">
          <Mixer>
            <MixerChannel name="Audio du bureau" db="-1.4 dB" value={92} width={73} stereo />
            <MixerChannel name="Mic/Aux" db="0.0 dB" value={100} width={45} />
          </Mixer>
          <DockFoot>
            <Hidden>0 hidden</Hidden>
            <Spring />
            <FootButton $w={23} aria-label="Disposition"><Rows /></FootButton>
            <FootButton $w={24} $line aria-label="Propriétés audio avancées"><Gears /></FootButton>
            <OptionsButton>Options<Caret width="9" height="9" /></OptionsButton>
          </DockFoot>
        </Dock>

        <Dock title="Transition de scènes">
          <Form>
            <Row>
              <Field>
                <Select aria-label="Transition"><option>Fondu</option></Select>
                <FieldEnd><Caret width="8" height="8" color="#fff" /></FieldEnd>
              </Field>
            </Row>
            <Row $gap={4}>
              <label htmlFor="duration">Durée</label>
              <Field>
                <TextInput id="duration" defaultValue="300 ms" />
                <FieldEnd><Up width="7" height="7" /><Down width="7" height="7" /></FieldEnd>
              </Field>
            </Row>
            <Row $gap={3}>
              <Spring />
              <SmallButton $fill aria-label="Ajouter une transition"><Plus /></SmallButton>
              <SmallButton aria-label="Supprimer la transition"><Trash width="12" height="12" /></SmallButton>
              <SmallButton aria-label="Plus d'options"><Dots /></SmallButton>
            </Row>
          </Form>
        </Dock>

        <Dock title="Commandes">
          <CommandList>
            {commands.map((label, i) => (
              <Row key={label} $gap={3}>
                <Command $primary={i === 0}>{label}</Command>
                {i === 2 && <Command $square aria-label="Réglages de la caméra virtuelle"><Gear color="#fff" /></Command>}
              </Row>
            ))}
          </CommandList>
        </Dock>
      </Docks>

      <StatusBar>
        <StatusItem>Paquets perdus (réseau) : 400 (0.6%)</StatusItem>
        <StatusItem><Signal />3770 kbps</StatusItem>
        <StatusItem><Broadcast />00:19:08</StatusItem>
        <StatusItem $dim><RecordDot />00:00:00</StatusItem>
        <StatusItem>CPU: 1.9%</StatusItem>
        <StatusItem>60.00 / 60.00 FPS</StatusItem>
      </StatusBar>

      <TaskBar>
        <Row $gap={4}><Weather /><div>13°C<br />Ciel couvert</div></Row>
        <Apps>
          <button aria-label="Démarrer"><Windows /></button>
          <SearchBox><Search width="12" height="12" /><input placeholder="Rechercher" aria-label="Rechercher" /></SearchBox>
          {apps.map(({ name, Icon, run, active, badge }) => (
            <AppButton key={name} aria-label={name} $run={run} $active={active}><Icon />{badge && <Badge>{badge}</Badge>}</AppButton>
          ))}
        </Apps>
        <Tray $gap={7}>
          <button aria-label="Icônes masquées"><Up width="9" height="9" /></button>
          <Mic width="12" height="12" color="#5c6084" /><Network width="12" height="12" /><Speaker width="11" height="11" />
          <Clock>23:07<br />14/04/2026</Clock>
          <Bell width="11" height="11" color="#1d1d22" />
        </Tray>
      </TaskBar>

      <Goal>
        <GoalFill />
        <GoalText><span>361</span><span>FOLLOWERS</span><span>500</span></GoalText>
      </Goal>
      <Pointer width="9" height="13" viewBox="0 0 9 13" aria-hidden="true"><path d="M1 0v11l2.500-2.300L5.200 12.500l1.800-.8L5.300 8H8.500z" fill="#fff" stroke="#222" strokeWidth=".5" /></Pointer>
    </Shell>
  );
}
